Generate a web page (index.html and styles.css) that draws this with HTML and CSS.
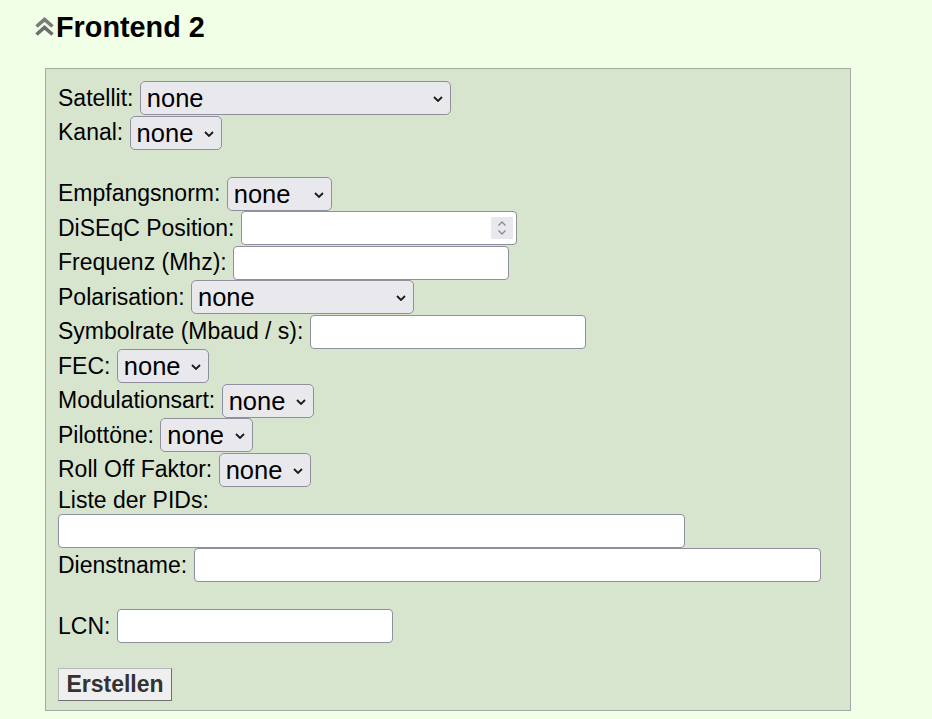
FILE: index.html
```html
<!DOCTYPE html>
<html lang="de">
<head>
<meta charset="utf-8">
<title>Frontend 2</title>
<link rel="stylesheet" href="styles.css">
</head>
<body>
<div class="page">
  <div class="heading">
    <svg class="collapse-icon" width="19" height="19" viewBox="0 0 19 19" aria-hidden="true">
      <polyline points="1.5,9.5 9.5,2.5 17.5,9.5" fill="none" stroke="#7b7b7b" stroke-width="3.6"/>
      <polyline points="1.5,17.5 9.5,10.5 17.5,17.5" fill="none" stroke="#6e6e6e" stroke-width="3.6"/>
    </svg>
    <h2 class="title">Frontend 2</h2>
  </div>
  <form class="panel">
    <div class="row"><label>Satellit:</label><span class="sel w311"><select><option>none</option></select><svg class="arrow" width="10" height="6" viewBox="0 0 10 6"><polyline points="1,1 5,5 9,1" fill="none" stroke="#1a1a1a" stroke-width="1.8"/></svg></span></div>
    <div class="row"><label>Kanal:</label><span class="sel w92"><select><option>none</option></select><svg class="arrow" width="10" height="6" viewBox="0 0 10 6"><polyline points="1,1 5,5 9,1" fill="none" stroke="#1a1a1a" stroke-width="1.8"/></svg></span></div>
    <div class="blank"></div>
    <div class="row"><label>Empfangsnorm:</label><span class="sel w105"><select><option>none</option></select><svg class="arrow" width="10" height="6" viewBox="0 0 10 6"><polyline points="1,1 5,5 9,1" fill="none" stroke="#1a1a1a" stroke-width="1.8"/></svg></span></div>
    <div class="row"><label>DiSEqC Position:</label><span class="num"><input class="field w276" type="number"><span class="spin"><svg width="10" height="16" viewBox="0 0 10 16"><polyline points="1.5,5.5 5,2 8.5,5.5" fill="none" stroke="#8a8a94" stroke-width="1.4"/><polyline points="1.5,10.5 5,14 8.5,10.5" fill="none" stroke="#8a8a94" stroke-width="1.4"/></svg></span></span></div>
    <div class="row"><label>Frequenz (Mhz):</label><input class="field w276" type="text"></div>
    <div class="row"><label>Polarisation:</label><span class="sel w223"><select><option>none</option></select><svg class="arrow" width="10" height="6" viewBox="0 0 10 6"><polyline points="1,1 5,5 9,1" fill="none" stroke="#1a1a1a" stroke-width="1.8"/></svg></span></div>
    <div class="row"><label>Symbolrate (Mbaud / s):</label><input class="field w276" type="text"></div>
    <div class="row"><label>FEC:</label><span class="sel w92"><select><option>none</option></select><svg class="arrow" width="10" height="6" viewBox="0 0 10 6"><polyline points="1,1 5,5 9,1" fill="none" stroke="#1a1a1a" stroke-width="1.8"/></svg></span></div>
    <div class="row"><label>Modulationsart:</label><span class="sel w92"><select><option>none</option></select><svg class="arrow" width="10" height="6" viewBox="0 0 10 6"><polyline points="1,1 5,5 9,1" fill="none" stroke="#1a1a1a" stroke-width="1.8"/></svg></span></div>
    <div class="row"><label>Pilottöne:</label><span class="sel w93"><select><option>none</option></select><svg class="arrow" width="10" height="6" viewBox="0 0 10 6"><polyline points="1,1 5,5 9,1" fill="none" stroke="#1a1a1a" stroke-width="1.8"/></svg></span></div>
    <div class="row"><label>Roll Off Faktor:</label><span class="sel w92"><select><option>none</option></select><svg class="arrow" width="10" height="6" viewBox="0 0 10 6"><polyline points="1,1 5,5 9,1" fill="none" stroke="#1a1a1a" stroke-width="1.8"/></svg></span></div>
    <div class="textline"><label>Liste der PIDs:</label></div>
    <div class="row"><input class="field w627" type="text"></div>
    <div class="row"><label>Dienstname:</label><input class="field w627" type="text"></div>
    <div class="blank"></div>
    <div class="row"><label>LCN:</label><input class="field w276" type="text"></div>
    <div class="actions"><button type="button" class="btn">Erstellen</button></div>
  </form>
</div>
</body>
</html>
```

FILE: styles.css
```css
html, body {
  margin: 0;
  padding: 0;
  background: #f0ffe6;
  font-family: "Liberation Sans", Arial, sans-serif;
  color: #000;
}

.page {
  padding: 11px 0 8px 35px;
}

.heading {
  display: flex;
  align-items: center;
  gap: 2px;
  height: 32px;
}

.collapse-icon {
  display: block;
  margin-top: -1px;
}

.title {
  margin: 0;
  font-size: 28.8px;
  font-weight: bold;
  line-height: 32px;
}

.panel {
  margin: 25px 0 0 10px;
  width: 806px;
  box-sizing: border-box;
  border: 1px solid #a9a9a9;
  background: #d7e5cf;
  padding: 12px 12px 9px 12px;
}

.row {
  display: flex;
  align-items: center;
  gap: 6.4px;
  height: 34.5px;
}

.row label,
.textline label {
  font-size: 23px;
  white-space: nowrap;
}

.textline {
  height: 26.5px;
  display: flex;
  align-items: center;
}

.blank {
  height: 26.5px;
}

.sel {
  position: relative;
  display: block;
  height: 34px;
}

.sel select {
  appearance: none;
  -webkit-appearance: none;
  display: block;
  width: 100%;
  height: 34px;
  box-sizing: border-box;
  margin: 0;
  padding: 0 20px 0 6px;
  font-family: "Liberation Sans", Arial, sans-serif;
  font-size: 25.5px;
  color: #000;
  background: #e9e9ed;
  border: 1px solid #8f8f9d;
  border-radius: 5px;
}

.sel .arrow {
  position: absolute;
  right: 8px;
  top: 15px;
  pointer-events: none;
}

.w92 { width: 92px; }
.w93 { width: 93px; }
.w105 { width: 105px; }
.w223 { width: 223px; }
.w311 { width: 311px; }
.w276 { width: 276px; }
.w627 { width: 627px; }

.field {
  display: block;
  height: 34px;
  box-sizing: border-box;
  margin: 0;
  padding: 0 6px;
  font-family: "Liberation Sans", Arial, sans-serif;
  font-size: 23px;
  background: #fff;
  border: 1px solid #8f8f9d;
  border-radius: 4px;
}

.num {
  position: relative;
  display: block;
}

.num input {
  -moz-appearance: textfield;
}

.num input::-webkit-inner-spin-button,
.num input::-webkit-outer-spin-button {
  -webkit-appearance: none;
  margin: 0;
}

.spin {
  position: absolute;
  right: 4px;
  top: 6px;
  width: 22px;
  height: 22px;
  background: #e9e9ed;
  display: flex;
  align-items: center;
  justify-content: center;
}

.spin svg {
  display: block;
}

.actions {
  margin-top: 24.75px;
}

.btn {
  display: block;
  height: 33px;
  width: 114px;
  box-sizing: border-box;
  margin: 0;
  padding: 0 6px;
  font-family: "Liberation Sans", Arial, sans-serif;
  font-size: 23px;
  font-weight: bold;
  color: #333;
  background: #efefef;
  border: 1px solid;
  border-color: #b9b9b9 #6f6f6f #6f6f6f #b9b9b9;
  border-radius: 0;
}
```
